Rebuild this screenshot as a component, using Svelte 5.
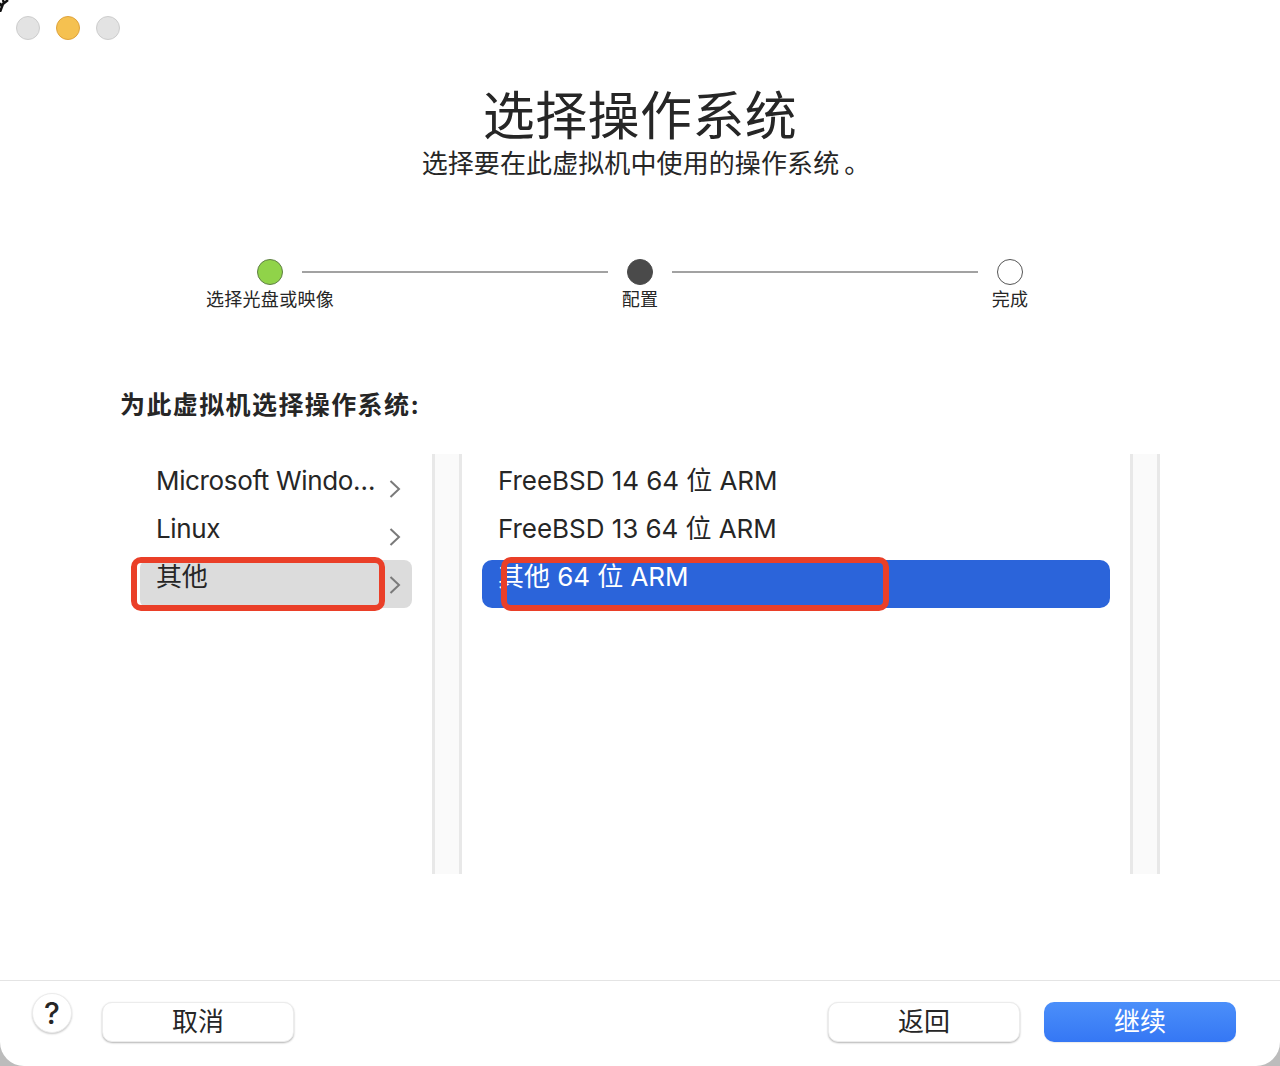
<script>
  const steps = [
    { label: '选择光盘或映像', state: 'done' },
    { label: '配置', state: 'current' },
    { label: '完成', state: 'todo' }
  ];
  const families = [
    { name: 'Microsoft Windo…' },
    { name: 'Linux' },
    { name: '其他', selected: true }
  ];
  const versions = [
    { name: 'FreeBSD 14 64 位 ARM' },
    { name: 'FreeBSD 13 64 位 ARM' },
    { name: '其他 64 位 ARM', selected: true }
  ];
</script>

<svg class="backdrop" width="12" height="12" viewBox="0 0 12 12">
  <path d="M0 12 L3 4 L8 0 M2 7 L0 3 M4 4 L3 0" fill="none" stroke="#111" stroke-width="2.4" />
</svg>

<div class="window">
  <div class="lights">
    <span class="light"></span>
    <span class="light amber"></span>
    <span class="light"></span>
  </div>

  <header>
    <h1>选择操作系统</h1>
    <p>选择要在此虚拟机中使用的操作系统<span class="stop">。</span></p>
  </header>

  <div class="steps">
    {#each steps as step, i}
      {#if i > 0}
        <div class="line"></div>
      {/if}
      <div class="step">
        <span class="dot {step.state}"></span>
        <span class="step-label">{step.label}</span>
      </div>
    {/each}
  </div>

  <h2>为此虚拟机选择操作系统:</h2>

  <div class="browser">
    <ul class="col left">
      {#each families as item}
        <li class:selected={item.selected}>
          <span class="name">{item.name}</span>
          <svg class="chev" width="12" height="18" viewBox="0 0 12 18">
            <path d="M1.5 1 L10 9 L1.5 17" fill="none" stroke="#7a7a7a" stroke-width="2" />
          </svg>
          {#if item.selected}
            <span class="mark mark-left"></span>
          {/if}
        </li>
      {/each}
    </ul>
    <div class="strip"></div>
    <ul class="col right">
      {#each versions as item}
        <li class:selected={item.selected}>
          <span class="name">{item.name}</span>
          {#if item.selected}
            <span class="mark mark-right"></span>
          {/if}
        </li>
      {/each}
    </ul>
    <div class="strip"></div>
  </div>

  <footer>
    <button class="help">?</button>
    <button class="btn cancel">取消</button>
    <button class="btn back">返回</button>
    <button class="btn primary">继续</button>
  </footer>
</div>

<style>
  :global(body) {
    margin: 0;
    background: linear-gradient(#fff 50%, #bcbcbc 50%);
  }
  .backdrop {
    position: absolute;
    top: 0;
    left: 0;
  }
  .window {
    position: relative;
    width: 1280px;
    height: 1066px;
    box-sizing: border-box;
    background: #fff;
    border-radius: 24px;
    display: flex;
    flex-direction: column;
    color: #262626;
    font-family: Inter, "Noto Sans CJK SC", sans-serif;
  }
  .lights {
    display: flex;
    gap: 16px;
    padding: 16px 0 0 16px;
    height: 24px;
  }
  .light {
    width: 24px;
    height: 24px;
    box-sizing: border-box;
    border-radius: 50%;
    background: #e3e3e3;
    border: 1px solid #cdcdcd;
  }
  .light.amber {
    background: #f5c150;
    border-color: #dfa33c;
  }
  header {
    text-align: center;
    margin-top: 48px;
  }
  h1 {
    margin: 0;
    font-size: 52px;
    line-height: 58px;
    font-weight: 400;
    letter-spacing: 0.4px;
  }
  header p {
    margin: 0;
    padding-left: 12px;
    font-size: 26px;
    line-height: 36px;
    letter-spacing: 0.1px;
  }
  .stop {
    margin-left: 5px;
  }
  .steps {
    display: flex;
    align-items: flex-start;
    margin: 77px 0 0 170px;
    width: 940px;
  }
  .step {
    width: 200px;
    flex: none;
    display: flex;
    flex-direction: column;
    align-items: center;
  }
  .line {
    flex: none;
    width: 306px;
    height: 2px;
    margin: 12px -68px 0;
    background: #a2a2a2;
  }
  .dot {
    width: 26px;
    height: 26px;
    box-sizing: border-box;
    border-radius: 50%;
    border: 1px solid #4a4a4a;
  }
  .dot.done { background: #90d349; border-color: #5f7f44; }
  .dot.current { background: #4a4a4a; }
  .dot.todo { background: #fff; border-color: #555; }
  .step-label {
    font-size: 18px;
    line-height: 24px;
    margin-top: 3px;
    letter-spacing: 0.3px;
  }
  h2 {
    margin: 0;
    margin-top: 75px;
    padding-left: 120px;
    font-size: 25px;
    line-height: 36px;
    font-weight: 700;
    letter-spacing: 1.4px;
  }
  .browser {
    display: flex;
    margin: 31px 0 0 132px;
    height: 420px;
  }
  .col {
    list-style: none;
    margin: 0;
    padding: 10px 0 0;
    box-sizing: border-box;
  }
  .col li {
    position: relative;
    height: 48px;
    display: flex;
    align-items: center;
    font-size: 26px;
  }
  .col li .name {
    margin-top: -14px;
    line-height: 34px;
    white-space: nowrap;
  }
  .left {
    width: 280px;
    margin-right: 20px;
  }
  .left li {
    padding-left: 24px;
    justify-content: space-between;
    padding-right: 11px;
    border-radius: 8px;
  }
  .left li .name {
    letter-spacing: -0.35px;
  }
  .left li.selected {
    background: #dcdcdc;
    margin-left: 8px;
    padding-left: 16px;
  }
  .chev {
    margin-top: 2px;
  }
  .right {
    width: 668px;
    padding-left: 20px;
    padding-right: 20px;
  }
  .right li {
    padding-left: 16px;
    border-radius: 10px;
  }
  .right li .name {
    letter-spacing: -0.05px;
  }
  .right li.selected {
    background: #2b64da;
    color: #fff;
  }
  .strip {
    flex: none;
    width: 30px;
    box-sizing: border-box;
    background: #fafafa;
    border-left: 3px solid #e8e8e8;
    border-right: 3px solid #e8e8e8;
  }
  .mark {
    position: absolute;
    box-sizing: border-box;
    border: 6px solid #ea3f28;
    border-radius: 10px;
    top: -3px;
    height: 54px;
  }
  .mark-left {
    left: -9px;
    width: 254px;
  }
  .mark-right {
    left: 19px;
    width: 388px;
  }
  footer {
    margin-top: 106px;
    border-top: 1px solid #e4e4e4;
    display: flex;
    align-items: flex-start;
    padding: 12px 44px 0 32px;
  }
  button {
    font-family: inherit;
    color: #262626;
    cursor: default;
  }
  .help {
    width: 40px;
    height: 40px;
    padding: 0;
    border-radius: 50%;
    border: 1px solid #ececec;
    background: #fff;
    font-size: 30px;
    font-weight: 500;
    line-height: 36px;
    box-shadow: 0 1px 2px rgba(0, 0, 0, 0.22);
    margin-right: 30px;
  }
  .btn {
    width: 192px;
    height: 40px;
    margin-top: 9px;
    padding: 0;
    border: 1px solid #ececec;
    border-radius: 10px;
    background: #fff;
    font-size: 26px;
    line-height: 36px;
    box-shadow: 0 1px 2px rgba(0, 0, 0, 0.3);
  }
  .back {
    margin-left: auto;
    margin-right: 24px;
  }
  .primary {
    color: #fff;
    border: none;
    background: linear-gradient(#4b8ffa, #3577f4);
    box-shadow: 0 1px 1px rgba(0, 0, 0, 0.08);
  }
</style>
